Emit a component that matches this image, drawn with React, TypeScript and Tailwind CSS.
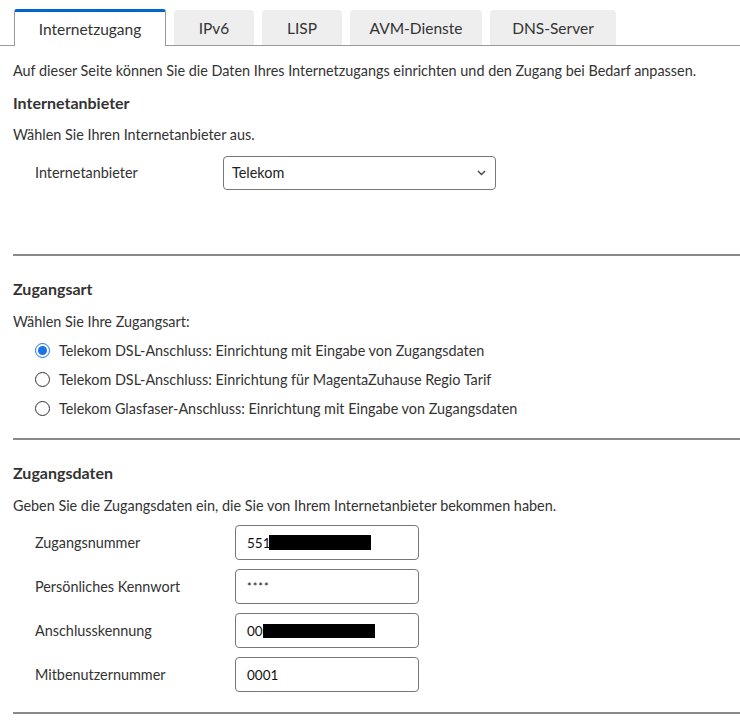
import React from 'react';

const tabs = [
  { label: 'Internetzugang', width: 'w-[152px]', active: true },
  { label: 'IPv6', width: 'w-[80px]' },
  { label: 'LISP', width: 'w-[80px]' },
  { label: 'AVM-Dienste', width: 'w-[132px]' },
  { label: 'DNS-Server', width: 'w-[126px]' },
];

const options = [
  'Telekom DSL-Anschluss: Einrichtung mit Eingabe von Zugangsdaten',
  'Telekom DSL-Anschluss: Einrichtung für MagentaZuhause Regio Tarif',
  'Telekom Glasfaser-Anschluss: Einrichtung mit Eingabe von Zugangsdaten',
];

function Radio({ checked }: { checked?: boolean }) {
  if (checked) {
    return (
      <span className="flex h-[15px] w-[15px] shrink-0 items-center justify-center rounded-full border-[1.5px] border-[#1a73e8]">
        <span className="h-[9px] w-[9px] rounded-full bg-[#1a73e8]" />
      </span>
    );
  }
  return <span className="h-[15px] w-[15px] shrink-0 rounded-full border-[1.5px] border-[#333]" />;
}

function Field({ label, children }: { label: string; children: React.ReactNode }) {
  return (
    <div className="flex items-center">
      <span className="w-[222px] pl-[22px]">{label}</span>
      <div className="flex h-[35px] w-[184px] items-center rounded-[4px] border border-[#777] px-[11px] text-[13.5px] text-[#111]">
        {children}
      </div>
    </div>
  );
}

export default function App() {
  return (
    <div className="min-h-[727px] w-[740px] bg-white font-['Lato',sans-serif] text-[14.4px] leading-[20px] text-[#333]">
      {/* Tabs */}
      <div className="flex h-[46px] items-end gap-2 border-b border-[#999] pl-[14px]">
        {tabs.map((t) =>
          t.active ? (
            <div
              key={t.label}
              className={`${t.width} -mb-px flex h-[37px] items-center justify-center rounded-t-[3px] border-x border-t-[3px] border-x-[#999] border-t-[#0066cc] bg-white text-[15.5px]`}
            >
              {t.label}
            </div>
          ) : (
            <div
              key={t.label}
              className={`${t.width} flex h-[35px] items-center justify-center rounded-t-[4px] bg-[#eeeeee] text-[15.5px]`}
            >
              {t.label}
            </div>
          )
        )}
      </div>

      <div className="pl-[13px]">
        <p className="mt-[15px]">
          Auf dieser Seite können Sie die Daten Ihres Internetzugangs einrichten und den Zugang bei Bedarf anpassen.
        </p>

        <h2 className="mt-[12px] text-[16px] font-bold">Internetanbieter</h2>
        <p className="mt-[12px]">Wählen Sie Ihren Internetanbieter aus.</p>
        <div className="mt-[11px] flex items-center">
          <span className="w-[210px] pl-[22px]">Internetanbieter</span>
          <div className="flex h-[34px] w-[273px] items-center justify-between rounded-[4px] border border-[#777] pl-[8px] pr-[9px] text-[#222]">
            <span>Telekom</span>
            <svg width="9" height="6" viewBox="0 0 9 6" fill="none">
              <path d="M1 1l3.5 3.5L8 1" stroke="#444" strokeWidth="1.4" />
            </svg>
          </div>
        </div>

        <div className="mt-[64px] h-[2px] bg-[#8a8a8a]" />

        <h2 className="mt-[23px] text-[16px] font-bold">Zugangsart</h2>
        <p className="mt-[13px]">Wählen Sie Ihre Zugangsart:</p>
        <div className="mt-[4px] flex flex-col pl-[22px]">
          {options.map((o, i) => (
            <div key={o} className="flex h-[29px] items-center gap-[9px]">
              <Radio checked={i === 0} />
              <span>{o}</span>
            </div>
          ))}
        </div>

        <div className="mt-[15px] h-[2px] bg-[#8a8a8a]" />

        <h2 className="mt-[23px] text-[16px] font-bold">Zugangsdaten</h2>
        <p className="mt-[13px]">Geben Sie die Zugangsdaten ein, die Sie von Ihrem Internetanbieter bekommen haben.</p>
        <div className="mt-[9px] flex flex-col gap-[9px]">
          <Field label="Zugangsnummer">
            <span>551</span>
            <span className="-ml-[2px] inline-block h-[15px] w-[102px] bg-black" />
          </Field>
          <Field label="Persönliches Kennwort">
            <span className="text-[11px] tracking-[1px]">****</span>
          </Field>
          <Field label="Anschlusskennung">
            <span>00</span>
            <span className="inline-block h-[14px] w-[112px] bg-black" />
          </Field>
          <Field label="Mitbenutzernummer">
            <span>0001</span>
          </Field>
        </div>

        <div className="mt-[20px] h-[2px] bg-[#8a8a8a]" />
      </div>
    </div>
  );
}
